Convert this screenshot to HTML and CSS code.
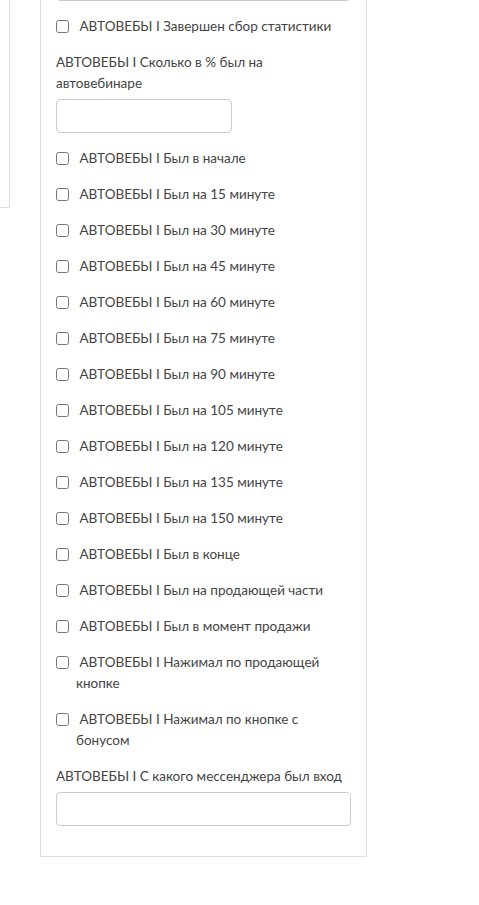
FILE: index.html
```html
<!DOCTYPE html>
<html lang="ru">
<head>
    <meta charset="UTF-8">
    <meta name="viewport" content="width=device-width, initial-scale=1.0">
    <title>АВТОВЕБЫ</title>
    <link rel="stylesheet" href="styles.css">
</head>
<body>
    <div class="page">
        <div class="sidebar"></div>
        <form class="panel">
            <input class="field" type="text">
            <label class="check"><input type="checkbox"> АВТОВЕБЫ I Завершен сбор статистики</label>
            <div class="group">
                <label class="caption" for="percent">АВТОВЕБЫ I Сколько в % был на автовебинаре</label>
                <input class="field short" type="text" id="percent">
            </div>
            <label class="check"><input type="checkbox"> АВТОВЕБЫ I Был в начале</label>
            <label class="check"><input type="checkbox"> АВТОВЕБЫ I Был на 15 минуте</label>
            <label class="check"><input type="checkbox"> АВТОВЕБЫ I Был на 30 минуте</label>
            <label class="check"><input type="checkbox"> АВТОВЕБЫ I Был на 45 минуте</label>
            <label class="check"><input type="checkbox"> АВТОВЕБЫ I Был на 60 минуте</label>
            <label class="check"><input type="checkbox"> АВТОВЕБЫ I Был на 75 минуте</label>
            <label class="check"><input type="checkbox"> АВТОВЕБЫ I Был на 90 минуте</label>
            <label class="check"><input type="checkbox"> АВТОВЕБЫ I Был на 105 минуте</label>
            <label class="check"><input type="checkbox"> АВТОВЕБЫ I Был на 120 минуте</label>
            <label class="check"><input type="checkbox"> АВТОВЕБЫ I Был на 135 минуте</label>
            <label class="check"><input type="checkbox"> АВТОВЕБЫ I Был на 150 минуте</label>
            <label class="check"><input type="checkbox"> АВТОВЕБЫ I Был в конце</label>
            <label class="check"><input type="checkbox"> АВТОВЕБЫ I Был на продающей части</label>
            <label class="check"><input type="checkbox"> АВТОВЕБЫ I Был в момент продажи</label>
            <label class="check"><input type="checkbox"> АВТОВЕБЫ I Нажимал по продающей кнопке</label>
            <label class="check"><input type="checkbox"> АВТОВЕБЫ I Нажимал по кнопке с бонусом</label>
            <div class="group">
                <label class="caption" for="messenger">АВТОВЕБЫ I С какого мессенджера был вход</label>
                <input class="field" type="text" id="messenger">
            </div>
        </form>
    </div>
</body>
</html>
```

FILE: styles.css
```css
body {
    margin: 0;
    background-color: #fff;
    font-family: Lato, "Open Sans", sans-serif;
    font-size: 13.5px;
    line-height: 21px;
    color: #444;
}
.page {
    display: flex;
    align-items: flex-start;
    gap: 30px;
    margin-top: -33px;
}
.sidebar {
    width: 9px;
    height: 240px;
    border-right: 1px solid #ddd;
    border-bottom: 1px solid #ddd;
}
.panel {
    width: 295px;
    display: flex;
    flex-direction: column;
    gap: 15px;
    padding: 0 15px 30px;
    border: 1px solid #ddd;
    border-top: none;
}
.field {
    display: block;
    box-sizing: border-box;
    width: 100%;
    height: 34px;
    margin: 0;
    border: 1px solid #ccc;
    border-radius: 4px;
    background: #fff;
}
.field.short {
    width: 176px;
}
.check {
    display: block;
    padding-left: 20px;
}
.check input {
    width: 13px;
    height: 13px;
    margin: 0 7px 0 -20px;
    vertical-align: -2px;
}
.group {
    display: flex;
    flex-direction: column;
    gap: 5px;
}
.caption {
    display: block;
}
```
